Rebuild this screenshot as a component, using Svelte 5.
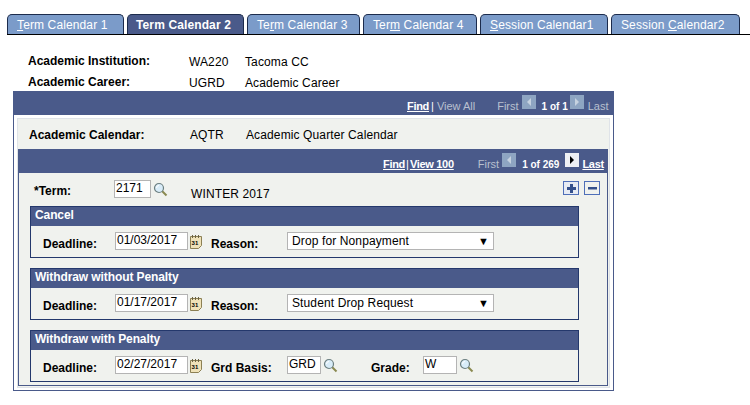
<script>
	const tabs = [
		{ pre: '', key: 'T', post: 'erm Calendar 1', width: 117 },
		{ pre: 'Term Calendar 2', key: '', post: '', width: 117, active: true },
		{ pre: 'Te', key: 'r', post: 'm Calendar 3', width: 113 },
		{ pre: 'Ter', key: 'm', post: ' Calendar 4', width: 114 },
		{ pre: '', key: 'S', post: 'ession Calendar1', width: 128 },
		{ pre: 'Session ', key: 'C', post: 'alendar2', width: 129 }
	];
</script>

{#snippet lookup()}
	<svg class="lookup" width="15" height="15" viewBox="0 0 15 15">
		<line x1="9" y1="9" x2="13.5" y2="13.5" stroke="#8a8a50" stroke-width="2" />
		<circle cx="6" cy="6" r="4.5" fill="#d8ecf8" stroke="#6c7f80" stroke-width="1.2" />
		<path d="M3.5 6a2.500 2.500 0 0 1 2.500-2.500" fill="none" stroke="#fff" />
	</svg>
{/snippet}

{#snippet calendar()}
	<svg class="cal" width="12" height="15" viewBox="0 0 12 15">
		<path d="M.5 2.500h11v9l-3 3h-8z" fill="#efe2b8" stroke="#8c8054" />
		<path d="M2.500 1v3M5.500 1v3M8.500 1v3" stroke="#6c6444" />
		<text x="1.500" y="11" class="cal-day">31</text>
	</svg>
{/snippet}

<div class="tabs">
	{#each tabs as tab}
		<div class="tab" class:active={tab.active} style="width: {tab.width}px">
			{tab.pre}<u>{tab.key}</u>{tab.post}
		</div>
	{/each}
</div>

<div class="info">
	<b>Academic Institution:</b><span>WA220</span><span>Tacoma CC</span>
	<b>Academic Career:</b><span>UGRD</span><span>Academic Career</span>
</div>

<div class="outer">
	<div class="nav outer-nav">
		<a href="#find">Find</a><span class="sep">|</span><span class="dim view">View All</span>
		<span class="dim first">First</span>
		<span class="arrow off left"></span>
		<b class="count">1 of 1</b>
		<span class="arrow off right"></span>
		<span class="dim last">Last</span>
	</div>
	<div class="outer-body">
		<div class="calendar-row">
			<b>Academic Calendar:</b><span>AQTR</span><span>Academic Quarter Calendar</span>
		</div>
		<div class="inner">
			<div class="nav inner-nav">
				<a href="#find">Find</a><span class="sep">|</span><a class="view" href="#view">View 100</a>
				<span class="dim first">First</span>
				<span class="arrow off left"></span>
				<b class="count">1 of 269</b>
				<span class="arrow on right"></span>
				<a class="last" href="#last">Last</a>
			</div>
			<div class="inner-body">
				<div class="term-row">
					<b class="term-label">*Term:</b>
					<span class="input term-input">2171</span>
					{@render lookup()}
					<span class="term-name">WINTER 2017</span>
					<span class="row-btn">
						<svg width="9" height="9" viewBox="0 0 9 9"><path d="M0 3h3V0h3v3h3v3H6v3H3V6H0z" fill="#34508c" /></svg>
					</span>
					<span class="row-btn minus">
						<svg width="9" height="9" viewBox="0 0 9 9"><path d="M0 3h9v2.500H0z" fill="#34508c" /></svg>
					</span>
				</div>

				<section>
					<h3>Cancel</h3>
					<div class="fields">
						<b class="deadline">Deadline:</b>
						<span class="input date">01/03/2017</span>
						{@render calendar()}
						<b class="reason">Reason:</b>
						<span class="select">Drop for Nonpayment<i>▼</i></span>
					</div>
				</section>

				<section>
					<h3>Withdraw without Penalty</h3>
					<div class="fields">
						<b class="deadline">Deadline:</b>
						<span class="input date">01/17/2017</span>
						{@render calendar()}
						<b class="reason">Reason:</b>
						<span class="select">Student Drop Request<i>▼</i></span>
					</div>
				</section>

				<section>
					<h3>Withdraw with Penalty</h3>
					<div class="fields">
						<b class="deadline">Deadline:</b>
						<span class="input date">02/27/2017</span>
						{@render calendar()}
						<b class="reason">Grd Basis:</b>
						<span class="input basis">GRD</span>
						{@render lookup()}
						<b class="grade">Grade:</b>
						<span class="input grade-input">W</span>
						{@render lookup()}
					</div>
				</section>
			</div>
		</div>
	</div>
</div>

<style>
	:global(body) {
		background: #fff;
		font-family: 'Liberation Sans', Arial, sans-serif;
		font-size: 12px;
		letter-spacing: 0.12px;
		color: #000;
	}

	b {
		letter-spacing: 0;
	}

	.tabs {
		display: flex;
		gap: 3px;
		margin: 14px 0 0 7px;
		height: 20px;
		border-bottom: 1px solid #000;
	}

	.tab {
		box-sizing: border-box;
		height: 20px;
		padding: 3px 0 0 9px;
		background: #7b9bc9;
		border: 1px solid #1c2b4c;
		border-bottom: 0;
		border-radius: 5px 5px 0 0;
		color: #fff;
		white-space: nowrap;
	}

	.tab.active {
		padding-left: 8px;
		background: #4a5a8a;
		font-weight: bold;
	}

	.info {
		display: grid;
		grid-template-columns: 161px 56px auto;
		justify-content: start;
		row-gap: 5px;
		margin: 19px 0 0 28px;
		line-height: 15px;
		height: 37px;
	}

	.info span {
		padding-top: 1px;
	}

	.outer {
		box-sizing: border-box;
		width: 601px;
		height: 300px;
		margin-left: 13px;
		border: 1px solid #4a5a8a;
		border-top: 0;
	}

	.nav {
		box-sizing: border-box;
		display: flex;
		align-items: center;
		height: 24px;
		padding-top: 6px;
		background: #4a5a8a;
		color: #fff;
		font-size: 11px;
		letter-spacing: 0;
		white-space: nowrap;
	}

	.outer-nav {
		padding-left: 393px;
	}

	.inner-nav {
		padding-left: 364px;
	}

	.nav a {
		color: #fff;
		font-weight: bold;
		letter-spacing: -0.3px;
	}

	.sep {
		margin: 0 3px 0 2px;
		color: #fff;
	}

	.inner-nav .sep {
		margin: 0 1px;
	}

	.dim {
		color: #b9c0cf;
	}

	.first {
		margin-left: 22px;
	}

	.inner-nav .first {
		margin-left: 24px;
	}

	.arrow {
		box-sizing: border-box;
		flex: none;
		width: 14px;
		height: 14px;
		margin-top: -9px;
		margin-left: 3px;
		position: relative;
	}

	.arrow::after {
		content: '';
		position: absolute;
		top: 3px;
		border: 4px solid transparent;
	}

	.arrow.off {
		background: #8ea5c2;
	}

	.arrow.on {
		background: #eef0f4;
	}

	.arrow.left::after {
		left: 1px;
		border-right: 4px solid #c6d2e0;
	}

	.arrow.right::after {
		left: 5px;
		border-left: 4px solid #c6d2e0;
	}

	.arrow.on.right::after {
		border-left-color: #000;
	}

	.count {
		margin-left: 6px;
		font-size: 10px;
	}

	.arrow.right {
		margin-left: 2px;
	}

	.inner-nav .arrow.right {
		margin-left: 6px;
	}

	.last {
		margin-left: 4px;
	}

	.inner-nav .last {
		margin-left: 3px;
	}

	.outer-body {
		box-sizing: border-box;
		height: 270px;
		margin: 3px 3px 0;
		background: #f0f2ee;
		border: 1px solid #dfe3e8;
		padding: 0;
	}

	.calendar-row {
		display: grid;
		grid-template-columns: 161px 56px auto;
		justify-content: start;
		padding: 9px 0 0 11px;
		height: 30px;
		box-sizing: border-box;
		line-height: 15px;
	}

	.inner {
		box-sizing: border-box;
		width: 590px;
		height: 237px;
		border: 1px solid #4a5a8a;
		border-top: 0;
	}

	.inner-body {
		padding: 0 0 0 11px;
	}

	.term-row {
		display: flex;
		align-items: center;
		height: 33px;
		position: relative;
	}

	.term-label {
		width: 84px;
		padding: 3px 0 0 4px;
		box-sizing: border-box;
	}

	.input {
		box-sizing: border-box;
		display: inline-block;
		flex: none;
		height: 18px;
		margin-top: -2px;
		padding: 0 1px;
		background: #fff;
		border: 1px solid #b4b4b4;
		font-size: 12px;
		letter-spacing: 0;
		line-height: 14px;
	}

	.term-input {
		width: 37px;
	}

	.lookup {
		margin-left: 2px;
		flex: none;
	}

	.term-name {
		margin-left: 23px;
		padding-top: 8px;
	}

	.row-btn {
		box-sizing: border-box;
		position: absolute;
		top: 8px;
		right: 28px;
		display: flex;
		align-items: center;
		justify-content: center;
		width: 16px;
		height: 14px;
		border: 1px solid #4f6fb8;
		background: #e6ebf4;
	}

	.row-btn.minus {
		right: 7px;
		background: #f0f2ee;
	}

	section {
		box-sizing: border-box;
		width: 549px;
		height: 52px;
		margin-bottom: 10px;
		border: 1px solid #24386c;
	}

	h3 {
		margin: 0;
		height: 19px;
		padding-left: 4px;
		background: #4a5a8a;
		color: #fff;
		font-size: 12px;
		letter-spacing: -0.1px;
		line-height: 17px;
	}

	.fields {
		display: flex;
		align-items: center;
		height: 31px;
		padding-left: 12px;
	}

	.fields b {
		padding-top: 4px;
	}

	.deadline {
		width: 72px;
	}

	.date {
		width: 73px;
	}

	.cal {
		margin-left: 2px;
		flex: none;
	}

	.cal-day {
		font-size: 6px;
		font-weight: bold;
	}

	.reason {
		margin-left: 9px;
		width: 76px;
	}

	.select {
		position: relative;
		box-sizing: border-box;
		width: 207px;
		height: 18px;
		margin-top: -2px;
		padding: 0 4px;
		background: #fff;
		border: 1px solid #b4b4b4;
		line-height: 16px;
	}

	.select i {
		position: absolute;
		right: 4px;
		top: 0;
		font-style: normal;
		font-size: 11px;
	}

	.basis {
		width: 34px;
	}

	.grade {
		margin-left: 33px;
		width: 52px;
	}

	.grade-input {
		width: 34px;
	}
</style>
